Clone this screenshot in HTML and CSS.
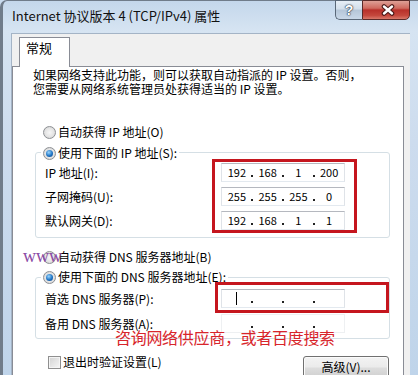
FILE: index.html
```html
<!DOCTYPE html>
<html lang="zh-CN">
<head>
    <meta charset="UTF-8">
    <meta name="viewport" content="width=device-width, initial-scale=1.0">
    <title>Internet 协议版本 4 (TCP/IPv4) 属性</title>
    <link rel="stylesheet" href="styles.css">
</head>
<body>

<div class="window">
    <div class="titlebar">
        <span class="title">Internet 协议版本 4 (TCP/IPv4) 属性</span>
        <div class="caption-btns">
            <span class="btn-help">?</span>
            <span class="btn-close">
                <svg width="16" height="12" viewBox="0 0 16 12">
                    <path d="M4 2.5 L12 9.5 M12 2.5 L4 9.5" stroke="#4a1a18" stroke-width="4.6" stroke-linecap="round"/>
                    <path d="M4 2.5 L12 9.5 M12 2.5 L4 9.5" stroke="#ffffff" stroke-width="2.4" stroke-linecap="round"/>
                </svg>
            </span>
        </div>
    </div>

    <div class="client">
        <div class="tabs">
            <span class="tab">常规</span>
        </div>

        <div class="panel">
            <p class="desc">如果网络支持此功能，则可以获取自动指派的 IP 设置。否则，<br>您需要从网络系统管理员处获得适当的 IP 设置。</p>

            <div class="option"><span class="radio"></span>自动获得 IP 地址(O)</div>

            <!-- 静态 IP -->
            <div class="group group-ip">
                <div class="group-title"><span class="radio checked"></span>使用下面的 IP 地址(S):</div>
                <div class="group-body">
                    <div class="labels">
                        <span class="field-label">IP 地址(I):</span>
                        <span class="field-label">子网掩码(U):</span>
                        <span class="field-label">默认网关(D):</span>
                    </div>
                    <div class="highlight">
                        <div class="ip"><span class="seg">192</span><span class="dot"></span><span class="seg">168</span><span class="dot"></span><span class="seg">1</span><span class="dot"></span><span class="seg">200</span></div>
                        <div class="ip"><span class="seg">255</span><span class="dot"></span><span class="seg">255</span><span class="dot"></span><span class="seg">255</span><span class="dot"></span><span class="seg">0</span></div>
                        <div class="ip"><span class="seg">192</span><span class="dot"></span><span class="seg">168</span><span class="dot"></span><span class="seg">1</span><span class="dot"></span><span class="seg">1</span></div>
                    </div>
                </div>
            </div>

            <div class="option option-dns"><span class="radio"></span>自动获得 DNS 服务器地址(B)</div>

            <!-- DNS -->
            <div class="group group-dns">
                <div class="group-title"><span class="radio checked"></span>使用下面的 DNS 服务器地址(E):</div>
                <div class="dns-body">
                    <span class="field-label first">首选 DNS 服务器(P):</span>
                    <div class="highlight small">
                        <div class="ip"><span class="seg"><span class="caret"></span></span><span class="dot"></span><span class="seg"></span><span class="dot"></span><span class="seg"></span><span class="dot"></span><span class="seg"></span></div>
                    </div>
                    <span class="field-label second">备用 DNS 服务器(A):</span>
                    <div class="ip alt"><span class="seg"></span><span class="dot"></span><span class="seg"></span><span class="dot"></span><span class="seg"></span><span class="dot"></span><span class="seg"></span></div>
                </div>
            </div>

            <div class="footer">
                <div class="check-row"><span class="checkbox"></span>退出时验证设置(L)</div>
                <span class="button">高级(V)...</span>
            </div>

            <span class="watermark">www</span>
            <span class="note">咨询网络供应商，或者百度搜索</span>
        </div>
    </div>
</div>

</body>
</html>
```

FILE: styles.css
```css
* {
    box-sizing: border-box;
}
body {
    margin: 0;
    width: 418px;
    height: 375px;
    overflow: hidden;
    background: #c9dbee;
    font-family: "Noto Sans CJK SC", "Liberation Sans", sans-serif;
    font-size: 12px;
    color: #000;
}

/* 窗口边框 */
.window {
    width: 418px;
    height: 375px;
    display: flex;
    flex-direction: column;
    padding: 0 8px;
    border-left: 3px solid #707c8a;
    border-top: 1px solid #707c8a;
    border-top-left-radius: 7px;
    background: linear-gradient(#c4d7eb, #d6e4f2 30px, #cddcee 140px, #bfd4ea);
}
.titlebar {
    flex: none;
    height: 32px;
    display: flex;
    align-items: flex-start;
    padding-left: 1px;
}
.title {
    flex: 1;
    margin-top: 7px;
    font-size: 13px;
    line-height: 16px;
    color: #111;
}
.caption-btns {
    display: flex;
    margin-top: -1px;
}
.btn-help {
    width: 27px;
    height: 20px;
    border: 1px solid #5a6878;
    border-right: none;
    border-radius: 0 0 0 5px;
    background: linear-gradient(#e6eef6, #d3dfeb 45%, #b5c6d8 50%, #c9d8e8);
    color: #fff;
    font-family: "Liberation Sans", sans-serif;
    font-weight: bold;
    font-size: 14px;
    line-height: 18px;
    text-align: center;
    text-shadow: 0 0 1px #2c3a4a, 0 0 1px #2c3a4a, 0 0 2px #2c3a4a;
}
.btn-close {
    width: 48px;
    height: 20px;
    border: 1px solid #5a2a28;
    border-radius: 0 0 5px 0;
    background: linear-gradient(#dea096, #cf6a5f 40%, #b8302a 50%, #c4473c 80%, #d8786a);
    display: flex;
    align-items: center;
    justify-content: center;
    padding-left: 4px;
}

/* 客户区 */
.client {
    flex: 1;
    min-height: 0;
    overflow: hidden;
    display: flex;
    flex-direction: column;
    background: #f0f0f0;
    border-top: 1px solid #a4b4c6;
    border-left: 1px solid #a4b4c6;
    padding: 3px 6px 0 0;
}
.tabs {
    flex: none;
    display: flex;
    padding-left: 7px;
}
.tab {
    position: relative;
    z-index: 1;
    width: 51px;
    height: 30px;
    margin-bottom: -1px;
    border: 1px solid #898c95;
    border-bottom: none;
    background: #fff;
    font-size: 13px;
    line-height: 16px;
    padding: 2px 0 0 6px;
}
.panel {
    position: relative;
    flex: 1;
    background: #fff;
    border: 1px solid #898c95;
    padding: 1px 0 0 20px;
}
.desc {
    margin: 0;
    line-height: 14px;
    white-space: nowrap;
}

.option {
    display: flex;
    align-items: center;
    gap: 2px;
    height: 14px;
    line-height: 14px;
    margin: 29px 0 0 10px;
}
.option-dns {
    margin-top: 12px;
}
.radio {
    width: 13px;
    height: 13px;
    flex: none;
    border-radius: 50%;
    border: 1px solid #8d9094;
    background: radial-gradient(circle, #f6f6f6 0, #e4e4e4 55%, #c8c8c8 100%);
    display: flex;
    align-items: center;
    justify-content: center;
}
.radio.checked::after {
    content: "";
    width: 7px;
    height: 7px;
    border-radius: 50%;
    background: radial-gradient(circle at 40% 35%, #9ad6ff, #1f74c4 55%, #0c3f80);
}

/* 分组框 */
.group {
    width: 355px;
    margin: 13px 0 0 2px;
    border: 1px solid #d5dfe5;
    border-radius: 3px;
    display: flex;
    flex-direction: column;
}
.group-ip {
    padding-bottom: 4px;
}
.group-dns {
    padding-bottom: 5px;
}
.group-title {
    align-self: flex-start;
    display: flex;
    align-items: center;
    gap: 2px;
    height: 14px;
    line-height: 14px;
    margin: -7px 0 0 5px;
    padding: 0 2px;
    background: #fff;
}
.group-dns .group-title {
    margin-top: -8px;
}
.group-body {
    display: flex;
    margin-top: -1px;
}
.labels {
    width: 176px;
    padding: 4px 0 0 9px;
    display: flex;
    flex-direction: column;
    gap: 5px;
}
.field-label {
    height: 19px;
    line-height: 19px;
    white-space: nowrap;
}
.highlight {
    border: 3px solid #c5161e;
    padding: 1px 9px 0 6px;
    display: flex;
    flex-direction: column;
    gap: 5px;
}
.highlight.small {
    padding: 4px 2px 2px 3px;
}
.ip {
    width: 124px;
    height: 19px;
    border: 1px solid;
    border-color: #b5b8bf #dfe3e8 #e3e9ef #dfe3e8;
    display: flex;
    align-items: center;
    padding: 0 1px;
    font-size: 11px;
    line-height: 13px;
}
.ip.alt {
    margin: 1px 0 0 6px;
    border-color: #eef0f2;
}
.seg {
    flex: 1;
    display: flex;
    justify-content: center;
    align-items: center;
    height: 13px;
}
/* 分隔点 */
.dot {
    width: 3px;
    height: 13px;
    display: flex;
    justify-content: center;
    align-items: flex-end;
}
.dot::after {
    content: "";
    width: 2px;
    height: 2px;
    margin-bottom: 2px;
    background: #222;
}
.caret {
    width: 1px;
    height: 13px;
    background: #000;
}

.dns-body {
    display: grid;
    grid-template-columns: 179px auto;
    margin-top: -2px;
}
.field-label.first {
    padding: 7px 0 0 9px;
    height: auto;
}
.field-label.second {
    padding-left: 9px;
    margin-top: 1px;
}

/* 底部 */
.footer {
    display: flex;
    justify-content: space-between;
    align-items: flex-start;
    margin-top: 16px;
    padding-right: 14px;
}
.check-row {
    display: flex;
    align-items: center;
    gap: 2px;
    height: 14px;
    line-height: 14px;
    margin-left: 15px;
}
.checkbox {
    width: 13px;
    height: 13px;
    border: 1px solid #8f8f8f;
    background: linear-gradient(135deg, #d2d2d2, #f6f6f6);
    box-shadow: inset 0 0 0 1px #f4f4f4;
}
.button {
    width: 86px;
    height: 23px;
    margin-top: 1px;
    border: 1px solid #707070;
    border-radius: 3px;
    background: linear-gradient(#f3f3f3, #ebebeb 48%, #dddddd 52%, #cfcfcf);
    box-shadow: inset 0 0 0 1px #fbfbfb;
    text-align: center;
    line-height: 20px;
}

/* 图片上的标注 */
.watermark {
    position: absolute;
    left: 10px;
    top: 180px;
    font-family: "Liberation Serif", serif;
    font-size: 18px;
    line-height: 18px;
    color: #8a4aa4;
}
.note {
    position: absolute;
    left: 102px;
    top: 262px;
    font-size: 16px;
    line-height: 16px;
    letter-spacing: -0.3px;
    color: #d8252b;
    white-space: nowrap;
}
```
